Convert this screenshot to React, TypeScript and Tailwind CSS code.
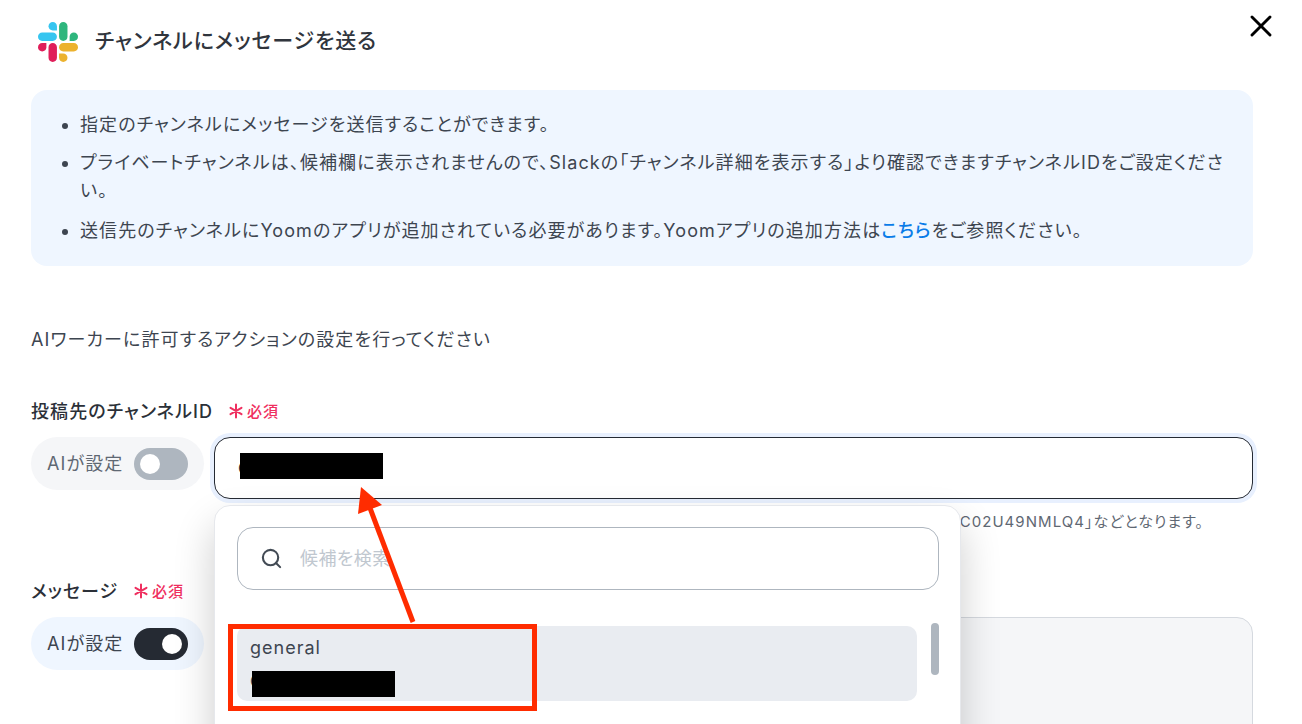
import React from 'react';
import { Search, X } from 'lucide-react';

const FONT = "font-['Inter','Noto_Sans_CJK_JP',sans-serif] [font-feature-settings:'palt']";

function SlackLogo() {
  return (
    <svg width="40" height="40" viewBox="0 0 122.8 122.8">
      <path fill="#E01E5A" d="M25.8 77.6c0 7.1-5.8 12.9-12.9 12.9S0 84.7 0 77.6s5.8-12.9 12.9-12.9h12.9v12.9z" />
      <path fill="#E01E5A" d="M32.3 77.6c0-7.1 5.8-12.9 12.9-12.9s12.9 5.8 12.9 12.9v32.3c0 7.1-5.8 12.9-12.9 12.9s-12.9-5.8-12.9-12.9V77.6z" />
      <path fill="#36C5F0" d="M45.2 25.8c-7.1 0-12.9-5.8-12.9-12.9S38.1 0 45.2 0s12.9 5.8 12.9 12.9v12.9H45.2z" />
      <path fill="#36C5F0" d="M45.2 32.3c7.1 0 12.9 5.8 12.9 12.9s-5.8 12.9-12.9 12.9H12.9C5.8 58.1 0 52.3 0 45.2s5.8-12.9 12.9-12.9h32.3z" />
      <path fill="#2EB67D" d="M97 45.2c0-7.1 5.8-12.9 12.9-12.9s12.9 5.8 12.9 12.9-5.8 12.9-12.9 12.9H97V45.2z" />
      <path fill="#2EB67D" d="M90.5 45.2c0 7.1-5.8 12.9-12.9 12.9s-12.9-5.8-12.9-12.9V12.9C64.7 5.8 70.5 0 77.6 0s12.9 5.8 12.9 12.9v32.3z" />
      <path fill="#ECB22E" d="M77.6 97c7.1 0 12.9 5.8 12.9 12.9s-5.8 12.9-12.9 12.9-12.9-5.8-12.9-12.9V97h12.9z" />
      <path fill="#ECB22E" d="M77.6 90.5c-7.1 0-12.9-5.8-12.9-12.9s5.8-12.9 12.9-12.9h32.3c7.1 0 12.9 5.8 12.9 12.9s-5.8 12.9-12.9 12.9H77.6z" />
    </svg>
  );
}

function Required() {
  return (
    <span className="flex items-center gap-[4px] text-[15px] font-medium leading-none tracking-[1px] text-[#ef2f5f]">
      <svg width="14" height="16" viewBox="0 0 14 16" stroke="#ef2f5f" strokeWidth="2" strokeLinecap="round">
        <path d="M7 1.5v13M1.5 4.8l11 6.4M12.5 4.8l-11 6.4" />
      </svg>
      必須
    </span>
  );
}

function AiToggle({ on }: { on: boolean }) {
  return (
    <div className={`flex h-[53px] w-[173px] shrink-0 items-center justify-between rounded-full pl-[16px] pr-[16px] ${on ? 'bg-[#eff6ff]' : 'bg-[#f5f6f8]'}`}>
      <span className={`text-[18px] tracking-[1.1px] ${on ? 'text-[#3d4550]' : 'text-[#5f6873]'}`}>AIが設定</span>
      <span className={`flex h-[32px] w-[54px] items-center rounded-full px-[6px] ${on ? 'justify-end bg-[#252a33]' : 'justify-start bg-[#aeb6bf]'}`}>
        <span className="size-[20px] rounded-full bg-white" />
      </span>
    </div>
  );
}

export default function App() {
  return (
    <div className={`${FONT} relative h-[724px] w-[1302px] overflow-hidden bg-white pl-[31px] pr-[49px] text-[#2b3038]`}>
      <button className="absolute left-[1243px] top-[8px] text-black" aria-label="閉じる">
        <X size={36} strokeWidth={1.9} />
      </button>

      <header className="flex h-[90px] items-start gap-[17px] pl-[7px] pt-[22px]">
        <SlackLogo />
        <h1 className="text-[21px] font-medium leading-[38px] tracking-[0.9px] text-[#30353d]">チャンネルにメッセージを送る</h1>
      </header>

      <ul className="h-[176px] list-disc rounded-[16px] bg-[#eff6ff] pl-[49px] pr-[20px] pt-[21px] text-[18px] leading-[28px] tracking-[1.1px] text-[#3d4550]">
        <li className="mb-[10px]">指定のチャンネルにメッセージを送信することができます。</li>
        <li className="mb-[12px]">プライベートチャンネルは、候補欄に表示されませんので、Slackの「チャンネル詳細を表示する」より確認できますチャンネルIDをご設定ください。</li>
        <li>送信先のチャンネルにYoomのアプリが追加されている必要があります。Yoomアプリの追加方法は<a className="font-medium text-[#0a7ce8]">こちら</a>をご参照ください。</li>
      </ul>

      <p className="mt-[60px] text-[18px] leading-[28px] tracking-[1.1px] text-[#3d4550]">AIワーカーに許可するアクションの設定を行ってください</p>

      <div className="mt-[43px] flex h-[28px] items-center gap-[16px]">
        <label className="text-[18px] font-medium tracking-[1.1px]">投稿先のチャンネルID</label>
        <Required />
      </div>

      <div className="mt-[12px] flex items-start gap-[10px]">
        <AiToggle on={false} />
        <div className="relative flex-1">
          <div className="flex h-[62px] items-center overflow-hidden rounded-[16px] border border-[#252a33] bg-white pl-[23px] text-[16px] shadow-[0_0_0_4px_#e8f0fe]">
            C02U49NMLQ4
          </div>
          <p className="mt-[13px] pr-[49px] text-right text-[15px] leading-[20px] tracking-[1.05px] text-[#5f6873]">「C02U49NMLQ4」などとなります。</p>

          {/* candidate dropdown */}
          <div className="absolute left-0 top-[68px] z-10 h-[300px] w-[747px] rounded-[16px] border border-[#e6e8ec] bg-white px-[22px] pt-[21px] shadow-[0_20px_40px_rgba(0,0,0,0.2)]">
            <div className="flex h-[63px] w-[702px] items-center gap-[17px] rounded-[16px] border border-[#aeb6bf] pl-[22px]">
              <Search size={23} strokeWidth={2.2} className="text-[#434b55]" />
              <span className="text-[18px] tracking-[0.4px] text-[#c0c7cf]">候補を検索</span>
            </div>
            <div className="mt-[33px] flex w-[702px] items-start justify-between">
              <div className="mt-[3px] h-[75px] w-[680px] rounded-[10px] bg-[#e9ecf1] pl-[13px] pt-[10px] text-[18px] tracking-[1px] text-[#3d4550]">
                <div className="leading-[24px]">general</div>
                <div className="mt-[9px] text-[16px] leading-[24px]">C02U49NMLQ4</div>
              </div>
              <div className="h-[52px] w-[8px] rounded-full bg-[#aeb6bf]" />
            </div>
          </div>
        </div>
      </div>

      <div className="mt-[45px] flex h-[28px] items-center gap-[16px]">
        <label className="text-[18px] font-medium tracking-[1px]">メッセージ</label>
        <Required />
      </div>

      <div className="mt-[12px] flex items-start gap-[10px]">
        <AiToggle on />
        <div className="h-[200px] flex-1 rounded-[16px] border border-[#d5d9df] bg-[#f5f6f8]" />
      </div>

      {/* redaction blocks and annotation drawn on top of the screenshot */}
      <div className="absolute left-[240px] top-[453px] z-20 h-[26px] w-[143px] bg-black" />
      <div className="absolute left-[252px] top-[671px] z-20 h-[26px] w-[143px] bg-black" />
      <div className="absolute left-[228px] top-[624px] z-20 h-[87px] w-[309px] border-[5px] border-[#ff2c00]" />
      <svg className="absolute left-[340px] top-[480px] z-20" width="90" height="150" viewBox="0 0 90 150">
        <path d="M73 142L30 28" stroke="#ff2c00" strokeWidth="5" />
        <path d="M21 7L42 25 18 34Z" fill="#ff2c00" />
      </svg>
    </div>
  );
}
